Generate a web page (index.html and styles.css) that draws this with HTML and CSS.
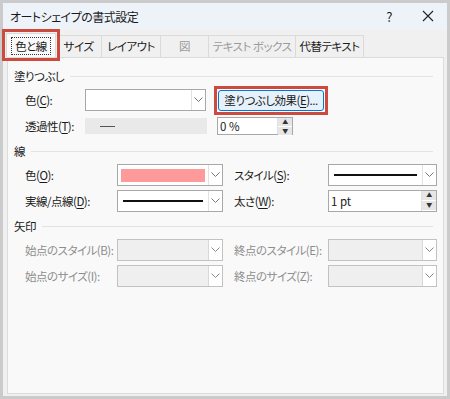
FILE: index.html
```html
<!DOCTYPE html>
<html lang="ja">
<head>
    <meta charset="UTF-8">
    <title>オートシェイプの書式設定</title>
    <link rel="stylesheet" href="styles.css">
</head>
<body>
    <div class="window">
        <div class="titlebar">
            <span class="title">オートシェイプの書式設定</span>
            <span class="help">?</span>
            <svg class="close" width="12" height="12" viewBox="0 0 12 12"><path d="M1 1L11 11M11 1L1 11" stroke="#222" stroke-width="1.1"/></svg>
        </div>

        <div class="tabs">
            <div class="tab active"><span class="focus">色と線</span></div>
            <div class="tab t2">サイズ</div>
            <div class="tab t3">レイアウト</div>
            <div class="tab t4 disabled">図</div>
            <div class="tab t5 disabled">テキスト ボックス</div>
            <div class="tab t6">代替テキスト</div>
        </div>

        <div class="panel">
            <div class="section-title">塗りつぶし</div>
            <div class="row">
                <span class="label fill-label">色(<u>C</u>):</span>
                <div class="combo w120"><div class="value"></div><div class="drop"><svg width="9" height="6" viewBox="0 0 9 6"><path d="M0.5 0.5L4.5 4.5L8.5 0.5" fill="none" stroke="#777"/></svg></div></div>
                <div class="effect-wrap"><button class="effect">塗りつぶし効果(<u>E</u>)...</button></div>
            </div>
            <div class="row row2">
                <span class="label fill-label">透過性(<u>T</u>):</span>
                <div class="slider"><span class="dash"></span></div>
                <div class="spin w75"><span class="spin-value">0 %</span><div class="spin-btns"><span>&#9650;</span><span>&#9660;</span></div></div>
            </div>

            <div class="section-title">線</div>
            <div class="row">
                <span class="label col1">色(<u>O</u>):</span>
                <div class="combo w105"><div class="value"><span class="swatch"></span></div><div class="drop"><svg width="9" height="6" viewBox="0 0 9 6"><path d="M0.5 0.5L4.5 4.5L8.5 0.5" fill="none" stroke="#777"/></svg></div></div>
                <span class="label col2">スタイル(<u>S</u>):</span>
                <div class="combo w108"><div class="value"><span class="stroke"></span></div><div class="drop"><svg width="9" height="6" viewBox="0 0 9 6"><path d="M0.5 0.5L4.5 4.5L8.5 0.5" fill="none" stroke="#777"/></svg></div></div>
            </div>
            <div class="row row2">
                <span class="label col1">実線/点線(<u>D</u>):</span>
                <div class="combo w105"><div class="value"><span class="stroke"></span></div><div class="drop"><svg width="9" height="6" viewBox="0 0 9 6"><path d="M0.5 0.5L4.5 4.5L8.5 0.5" fill="none" stroke="#777"/></svg></div></div>
                <span class="label col2">太さ(<u>W</u>):</span>
                <div class="spin w108"><span class="spin-value">1 pt</span><div class="spin-btns"><span>&#9650;</span><span>&#9660;</span></div></div>
            </div>

            <div class="section-title">矢印</div>
            <div class="row disabled-row">
                <span class="label col1">始点のスタイル(B):</span>
                <div class="combo w105 off"><div class="value"></div><div class="drop"><svg width="9" height="6" viewBox="0 0 9 6"><path d="M0.5 0.5L4.5 4.5L8.5 0.5" fill="none" stroke="#888"/></svg></div></div>
                <span class="label col2">終点のスタイル(E):</span>
                <div class="combo w108 off"><div class="value"></div><div class="drop"><svg width="9" height="6" viewBox="0 0 9 6"><path d="M0.5 0.5L4.5 4.5L8.5 0.5" fill="none" stroke="#888"/></svg></div></div>
            </div>
            <div class="row row2 disabled-row">
                <span class="label col1">始点のサイズ(I):</span>
                <div class="combo w105 off"><div class="value"></div><div class="drop"><svg width="9" height="6" viewBox="0 0 9 6"><path d="M0.5 0.5L4.5 4.5L8.5 0.5" fill="none" stroke="#888"/></svg></div></div>
                <span class="label col2">終点のサイズ(Z):</span>
                <div class="combo w108 off"><div class="value"></div><div class="drop"><svg width="9" height="6" viewBox="0 0 9 6"><path d="M0.5 0.5L4.5 4.5L8.5 0.5" fill="none" stroke="#888"/></svg></div></div>
            </div>
        </div>
    </div>
</body>
</html>
```
FILE: styles.css
```css
body {
    margin: 0;
    padding: 3px;
    background-color: #cbcbcb;
    font-family: "Noto Sans CJK JP", "Noto Sans", sans-serif;
    font-size: 11.5px;
    letter-spacing: -0.5px;
    font-feature-settings: "palt";
    color: #1a1a1a;
}
u {
    text-decoration: underline;
    text-underline-offset: 2px;
}
.window {
    width: 444px;
    height: 393px;
    background: #f0f0f0;
    display: flex;
    flex-direction: column;
}
.titlebar {
    height: 26px;
    background: #eef3f9;
    display: flex;
    align-items: center;
    padding-left: 7px;
}
.title {
    flex: 1;
    font-size: 12px;
}
.help {
    font-size: 13px;
    margin-right: 30px;
}
.close {
    margin-right: 13px;
}
.tabs {
    display: flex;
    align-items: flex-end;
    height: 28px;
    padding-left: 4px;
}
.tab {
    height: 22px;
    line-height: 21px;
    box-sizing: border-box;
    border: 1px solid #dadada;
    border-bottom: none;
    background: #f0f0f0;
    margin-left: -1px;
    text-align: center;
    white-space: nowrap;
}
.t2 { width: 47px; }
.t3 { width: 60px; }
.t4 { width: 49px; }
.t5 { width: 88px; }
.t6 { width: 69px; }
.tab.disabled {
    color: #9a9a9a;
}
.tab.active {
    height: 24px;
    width: 50px;
    background: #f9f9f9;
    display: flex;
    align-items: center;
    justify-content: center;
    outline: 3px solid #cc4a3e;
    outline-offset: 1px;
    position: relative;
    z-index: 1;
}
.focus {
    border: 1px dotted #333;
    padding: 0 3px;
    line-height: 16px;
}
.panel {
    flex: 1;
    margin: 0 3px 2px 4px;
    background: #f9f9f9;
    border: 1px solid #dcdcdc;
    padding: 10px 0 0 6px;
}
.section-title {
    display: flex;
    align-items: center;
    gap: 6px;
    height: 16px;
    margin-right: 10px;
}
.section-title::after {
    content: "";
    flex: 1;
    height: 1px;
    background: #e3e3e3;
}
.row {
    display: flex;
    align-items: center;
    height: 22px;
    margin-top: 5px;
    padding-left: 11px;
}
.row2 {
    margin-top: 4px;
    margin-bottom: 6px;
}
.label {
    white-space: nowrap;
}
.fill-label { width: 60px; }
.col1 { width: 92px; }
.col2 { width: 94px; margin-left: 11px; }
.disabled-row .label {
    color: #8d8d8d;
}
.combo {
    height: 22px;
    box-sizing: border-box;
    border: 1px solid #a8a8a8;
    background: #fff;
    display: flex;
}
.combo .value {
    flex: 1;
    display: flex;
    align-items: center;
    padding: 0 3px;
}
.combo .drop {
    width: 13px;
    border-left: 1px solid #e2e2e2;
    display: flex;
    align-items: center;
    justify-content: center;
}
.combo.off {
    background: #efefef;
    border-color: #c2c2c2;
}
.combo.off .drop {
    background: #fff;
    border-left-color: #d8d8d8;
}
.w120 { width: 121px; }
.w105 { width: 106px; }
.w108 { width: 109px; }
.w75 { width: 76px; }
.swatch {
    flex: 1;
    height: 13px;
    background: #ff9a9a;
}
.stroke {
    flex: 1;
    height: 2px;
    background: #111;
    margin: 0 2px;
}
.effect-wrap {
    margin-left: 8px;
    padding: 1px;
    border: 3px solid #cc4a3e;
}
.effect {
    font-family: "Noto Sans CJK JP", "Noto Sans", sans-serif;
    font-size: 11.5px;
    letter-spacing: -0.5px;
    font-feature-settings: "palt";
    height: 21px;
    width: 106px;
    padding: 0;
    background: #e5f1fb;
    border: 1px solid #0078d7;
    border-radius: 3px;
    color: #1a1a1a;
    white-space: nowrap;
}
.slider {
    width: 122px;
    height: 16px;
    background: #e9e9e9;
    display: flex;
    align-items: center;
}
.dash {
    width: 15px;
    height: 1px;
    background: #555;
    margin-left: 15px;
}
.row2 .slider + .spin {
    margin-left: 10px;
    height: 18px;
}
.spin {
    height: 22px;
    box-sizing: border-box;
    border: 1px solid #a8a8a8;
    background: #fff;
    display: flex;
}
.spin-value {
    flex: 1;
    padding-left: 2px;
    display: flex;
    align-items: center;
    letter-spacing: 0;
    white-space: pre;
}
.spin-btns {
    width: 14px;
    display: flex;
    flex-direction: column;
    border-left: 1px solid #e2e2e2;
}
.spin-btns span {
    flex: 1;
    background: #e6e6e6;
    font-size: 6px;
    line-height: 8px;
    text-align: center;
    color: #333;
    border-bottom: 1px solid #fff;
}
```
